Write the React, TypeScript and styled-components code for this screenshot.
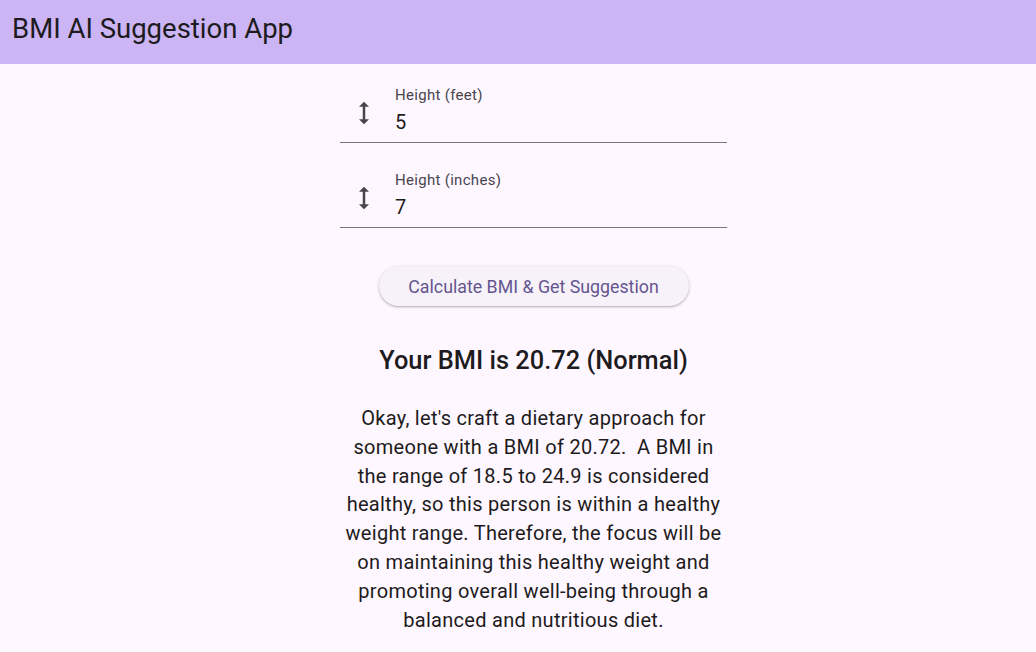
import styled, { createGlobalStyle } from "styled-components";

const GlobalStyle = createGlobalStyle`
  html, body {
    margin: 0;
    padding: 0;
    background: #fef7ff;
    font-family: Roboto, "Liberation Sans", sans-serif;
    color: #1d1b20;
  }
`;

const $Page = styled.div`
  width: 1036px;
  height: 652px;
  overflow: hidden;
  background: #fef7ff;
`;

const $AppBar = styled.header`
  height: 64px;
  background: #cbb5f4;
  display: flex;
  align-items: center;
  padding-left: 12px;
  padding-bottom: 7px;
  box-sizing: border-box;
`;

const $Title = styled.h1`
  margin: 0;
  font-size: 27.5px;
  font-weight: 400;
  color: #1d1b20;
`;

const $Body = styled.main`
  width: 387px;
  margin-left: 340px;
  padding-top: 17px;
  display: flex;
  flex-direction: column;
  align-items: center;
`;

const $Fields = styled.div`
  align-self: stretch;
  display: flex;
  flex-direction: column;
  gap: 23px;
`;

const $Field = styled.label`
  display: flex;
  align-items: center;
  height: 62px;
  border-bottom: 1px solid #79747e;
  box-sizing: border-box;
`;

const $IconBox = styled.span`
  width: 48px;
  display: flex;
  justify-content: center;
  color: #49454f;
  margin-top: 2px;
`;

const $Inputs = styled.span`
  display: flex;
  flex-direction: column;
  gap: 5px;
  padding-left: 7px;
  margin-top: -2px;
`;

const $Label = styled.span`
  font-size: 15px;
  line-height: 18px;
  color: #49454f;
  letter-spacing: 0.3px;
`;

const $Value = styled.span`
  font-size: 20px;
  line-height: 26px;
  color: #1d1b20;
`;

const $Button = styled.button`
  margin-top: 38px;
  height: 40px;
  width: 310px;
  border: none;
  border-radius: 20px;
  background: #f7f2fa;
  color: #65558f;
  font-family: Roboto, "Liberation Sans", sans-serif;
  font-size: 17.8px;
  box-shadow: 0 1px 3px rgba(0, 0, 0, 0.25), 0 1px 1px rgba(0, 0, 0, 0.08);
  cursor: pointer;
`;

const $Heading = styled.h2`
  margin: 38px 0 0;
  font-size: 25.4px;
  line-height: 32px;
  font-weight: 500;
  color: #1d1b20;
`;

const $Suggestion = styled.p`
  margin: 28px 0 0;
  font-size: 20px;
  line-height: 28.8px;
  letter-spacing: 0.28px;
  text-align: center;
  white-space: pre-wrap;
  color: #1d1b20;
`;

const HeightIcon = () => (
  <svg width="30" height="30" viewBox="0 0 24 24" fill="currentColor">
    <path d="M13 6.99h3L12 3 8 6.99h3v10.02H8L12 21l4-3.99h-3z" />
  </svg>
);

type FieldProps = { label: string; value: string };

const HeightField = ({ label, value }: FieldProps) => (
  <$Field>
    <$IconBox>
      <HeightIcon />
    </$IconBox>
    <$Inputs>
      <$Label>{label}</$Label>
      <$Value>{value}</$Value>
    </$Inputs>
  </$Field>
);

const suggestion =
  "Okay, let's craft a dietary approach for someone with a BMI of 20.72.  A BMI in the range of 18.5 to 24.9 is considered healthy, so this person is within a healthy weight range. Therefore, the focus will be on maintaining this healthy weight and promoting overall well-being through a balanced and nutritious diet.";

const App = () => {
  return (
    <$Page>
      <GlobalStyle />
      <$AppBar>
        <$Title>BMI AI Suggestion App</$Title>
      </$AppBar>
      <$Body>
        <$Fields>
          <HeightField label="Height (feet)" value="5" />
          <HeightField label="Height (inches)" value="7" />
        </$Fields>
        <$Button type="button">Calculate BMI &amp; Get Suggestion</$Button>
        <$Heading>Your BMI is 20.72 (Normal)</$Heading>
        <$Suggestion>{suggestion}</$Suggestion>
      </$Body>
    </$Page>
  );
};

export default App;
